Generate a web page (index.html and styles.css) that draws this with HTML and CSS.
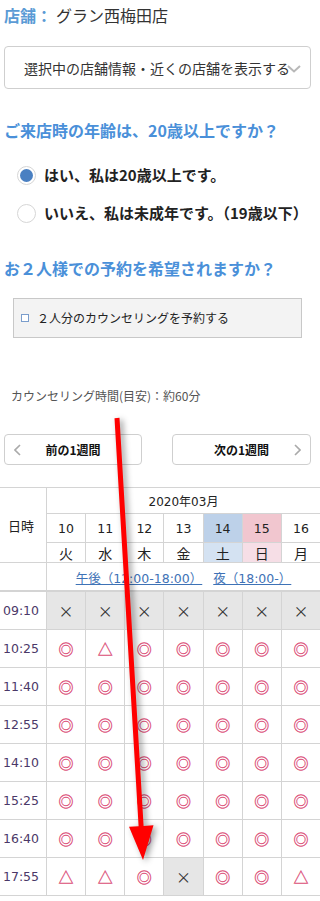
FILE: index.html
```html
<!DOCTYPE html>
<html lang="ja">
<head>
<meta charset="utf-8">
<title>予約</title>
<link rel="stylesheet" href="styles.css">
</head>
<body>
<div class="page">
  <div class="top">
    <p class="store"><span class="store-label">店舗：</span><span class="store-name">グラン西梅田店</span></p>
    <div class="select">
      <span class="select-text">選択中の店舗情報・近くの店舗を表示する</span>
      <svg class="select-chev" width="14" height="8" viewBox="0 0 14 8"><polyline points="1,1 7,6.5 13,1" fill="none" stroke="#b8b8b8" stroke-width="2"/></svg>
    </div>
    <h2 class="q q1">ご来店時の年齢は、20歳以上ですか？</h2>
    <div class="radios">
      <div class="radio"><span class="dot checked"></span><span class="radio-text">はい、私は20歳以上です。</span></div>
      <div class="radio"><span class="dot"></span><span class="radio-text">いいえ、私は未成年です。（19歳以下）</span></div>
    </div>
    <h2 class="q q2">お２人様での予約を希望されますか？</h2>
    <div class="pair"><span class="box"></span><span class="pair-text">２人分のカウンセリングを予約する</span></div>
    <p class="duration">カウンセリング時間(目安)：約60分</p>
    <div class="weeknav">
      <div class="wbtn prev">
        <svg width="7" height="12" viewBox="0 0 7 12"><polyline points="6,1 1,6 6,11" fill="none" stroke="#aaa" stroke-width="1.6"/></svg>
        <span class="wtext">前の1週間</span>
        <span></span>
      </div>
      <div class="wbtn next">
        <span></span>
        <span class="wtext">次の1週間</span>
        <svg width="7" height="12" viewBox="0 0 7 12"><polyline points="1,1 6,6 1,11" fill="none" stroke="#aaa" stroke-width="1.6"/></svg>
      </div>
    </div>
  </div>

  <div class="cal">
    <div class="c head-dt">日時</div>
    <div class="c month">2020年03月</div>
    <div class="c num">10</div>
    <div class="c num">11</div>
    <div class="c num">12</div>
    <div class="c num">13</div>
    <div class="c num sat">14</div>
    <div class="c num sun">15</div>
    <div class="c num">16</div>
    <div class="c wd">火</div>
    <div class="c wd">水</div>
    <div class="c wd">木</div>
    <div class="c wd">金</div>
    <div class="c wd sat-l">土</div>
    <div class="c wd sun-l">日</div>
    <div class="c wd">月</div>
    <div class="c linkrow-l"></div>
    <div class="c linkrow"><a class="tlink">午後（12:00-18:00）</a><a class="tlink">夜（18:00-）</a></div>

    <div class="c time">09:10</div>
    <div class="c mk x full">×</div><div class="c mk x full">×</div><div class="c mk x full">×</div><div class="c mk x full">×</div><div class="c mk x full">×</div><div class="c mk x full">×</div><div class="c mk x full">×</div>

    <div class="c time">10:25</div>
    <div class="c mk o">◎</div><div class="c mk t">△</div><div class="c mk o">◎</div><div class="c mk o">◎</div><div class="c mk o">◎</div><div class="c mk o">◎</div><div class="c mk o">◎</div>

    <div class="c time">11:40</div>
    <div class="c mk o">◎</div><div class="c mk o">◎</div><div class="c mk o">◎</div><div class="c mk o">◎</div><div class="c mk o">◎</div><div class="c mk o">◎</div><div class="c mk o">◎</div>

    <div class="c time">12:55</div>
    <div class="c mk o">◎</div><div class="c mk o">◎</div><div class="c mk o">◎</div><div class="c mk o">◎</div><div class="c mk o">◎</div><div class="c mk o">◎</div><div class="c mk o">◎</div>

    <div class="c time">14:10</div>
    <div class="c mk o">◎</div><div class="c mk o">◎</div><div class="c mk o">◎</div><div class="c mk o">◎</div><div class="c mk o">◎</div><div class="c mk o">◎</div><div class="c mk o">◎</div>

    <div class="c time">15:25</div>
    <div class="c mk o">◎</div><div class="c mk o">◎</div><div class="c mk o">◎</div><div class="c mk o">◎</div><div class="c mk o">◎</div><div class="c mk o">◎</div><div class="c mk o">◎</div>

    <div class="c time">16:40</div>
    <div class="c mk o">◎</div><div class="c mk o">◎</div><div class="c mk o">◎</div><div class="c mk o">◎</div><div class="c mk o">◎</div><div class="c mk o">◎</div><div class="c mk o">◎</div>

    <div class="c time">17:55</div>
    <div class="c mk t">△</div><div class="c mk t">△</div><div class="c mk o">◎</div><div class="c mk x full">×</div><div class="c mk o">◎</div><div class="c mk o">◎</div><div class="c mk t">△</div>
  </div>

  <svg class="arrow" width="320" height="901" viewBox="0 0 320 901">
    <polygon points="114.5,418.2 119.5,417.8 143.6,826 153.5,825.3 143,860 129,826.8 138.6,826.3" fill="#ff0000"/>
  </svg>
</div>
</body>
</html>
```

FILE: styles.css
```css
html, body {
  margin: 0;
  padding: 0;
  background: #fff;
  overflow-x: hidden;
}

body {
  font-family: "Noto Sans CJK JP", "Noto Sans", sans-serif;
  color: #333;
}

.page {
  position: relative;
  width: 320px;
  height: 901px;
  overflow: hidden;
}

.top {
  padding: 0 9px 0 4px;
}

.store {
  margin: 0;
  padding-top: 5px;
  font-size: 16px;
  line-height: 20px;
  white-space: nowrap;
}

.store-label {
  color: #5b9bd5;
  font-weight: bold;
}

.store-name {
  color: #333;
  margin-left: 4px;
}

.select {
  margin-top: 21px;
  height: 43px;
  box-sizing: border-box;
  border: 1px solid #cfcfcf;
  border-radius: 4px;
  display: flex;
  align-items: center;
  padding: 0 9px 0 19px;
}

.select-text {
  flex: 0 1 auto;
  min-width: 0;
  white-space: nowrap;
  font-size: 14px;
  line-height: 20px;
  color: #333;
}

.select-chev {
  flex-shrink: 0;
  margin-left: auto;
  margin-top: 2px;
}

.q {
  margin: 0;
  font-size: 16px;
  line-height: 20px;
  font-weight: bold;
  color: #4a90d9;
  white-space: nowrap;
}

.q1 { margin-top: 31px; }
.q2 { margin-top: 33px; }

.radios {
  margin-top: 23px;
  display: flex;
  flex-direction: column;
  gap: 14px;
}

.radio {
  display: flex;
  align-items: center;
  height: 24px;
  padding-left: 13px;
  gap: 8px;
  white-space: nowrap;
}

.dot {
  flex-shrink: 0;
  width: 19px;
  height: 19px;
  box-sizing: border-box;
  border-radius: 50%;
  border: 1px solid #d6d6d6;
  background: #fff;
  display: flex;
  align-items: center;
  justify-content: center;
}

.dot.checked::after {
  content: "";
  width: 13px;
  height: 13px;
  border-radius: 50%;
  background: #4a80c2;
}

.radio-text {
  font-size: 15px;
  line-height: 20px;
  font-weight: bold;
  color: #222;
}

.pair {
  margin-top: 20px;
  margin-left: 9px;
  width: 289px;
  height: 40px;
  box-sizing: border-box;
  border: 1px solid #c8c8c8;
  background: #f3f3f3;
  display: flex;
  align-items: center;
  padding-left: 7px;
}

.box {
  width: 8px;
  height: 8px;
  box-sizing: border-box;
  border: 1px solid #7a9dcc;
  background: #fff;
  flex-shrink: 0;
}

.pair-text {
  margin-left: 8px;
  font-size: 12px;
  line-height: 16px;
  color: #222;
  white-space: nowrap;
}

.duration {
  margin: 50px 0 0 7px;
  font-size: 12px;
  line-height: 16px;
  color: #555;
  white-space: nowrap;
}

.weeknav {
  margin-top: 30px;
  display: flex;
  justify-content: space-between;
}

.wbtn {
  height: 31px;
  box-sizing: border-box;
  border: 1px solid #cfcfcf;
  border-radius: 4px;
  background: #fff;
  display: grid;
  grid-template-columns: 7px 1fr 7px;
  align-items: center;
  padding: 0 9px;
}

.wbtn.prev { width: 138px; }
.wbtn.next { width: 139px; }

.wtext {
  text-align: center;
  font-size: 12px;
  font-weight: bold;
  color: #111;
  line-height: 16px;
}

.cal {
  margin-top: 22px;
  display: grid;
  grid-template-columns: 46px repeat(7, 1fr);
  grid-template-rows: 25px 28px 19px 28px repeat(8, 37px);
  gap: 1px;
  padding: 1px 0;
  background: #d4d4d4;
}

.c {
  background: #fff;
  display: flex;
  align-items: center;
  justify-content: center;
  min-width: 0;
  box-sizing: border-box;
}

.head-dt {
  grid-column: 1;
  grid-row: 1 / span 3;
  font-size: 13px;
  color: #222;
  padding-right: 4px;
}

.month {
  grid-column: 2 / span 7;
  font-family: "DejaVu Sans", "Noto Sans CJK JP", sans-serif;
  font-size: 12px;
  color: #222;
}

.num {
  font-family: "DejaVu Sans", "Noto Sans CJK JP", sans-serif;
  font-size: 12.5px;
  color: #222;
}

.wd {
  font-size: 14px;
  color: #222;
}

.sat { background: #bdd1e9; }
.sun { background: #f1c6cf; }
.sat-l { background: #d4e2f2; }
.sun-l { background: #f6dee6; }

.linkrow-l {
  border-bottom: 1px solid #d4d4d4;
}

.linkrow {
  grid-column: 2 / span 7;
  border-bottom: 1px solid #d4d4d4;
  gap: 11px;
  padding-top: 2px;
}

.tlink {
  font-family: "DejaVu Sans", "Noto Sans CJK JP", sans-serif;
  font-size: 12.5px;
  color: #3e72b6;
  text-decoration: underline;
  white-space: nowrap;
}

.time {
  justify-content: flex-start;
  padding-left: 3px;
  font-family: "DejaVu Sans", "Noto Sans", sans-serif;
  font-size: 12.5px;
  color: #4b3868;
}

.mk {
  font-size: 15px;
  line-height: 1;
}

.mk.o, .mk.t {
  color: #db4b76;
  -webkit-text-stroke: 0.3px #db4b76;
}

.mk.x {
  color: #333;
  font-size: 15px;
}

.full {
  background: #e6e6e6;
}

.arrow {
  position: absolute;
  top: 0;
  left: 0;
  pointer-events: none;
  filter: drop-shadow(3px 2px 3px rgba(0, 0, 0, 0.4));
}
```
